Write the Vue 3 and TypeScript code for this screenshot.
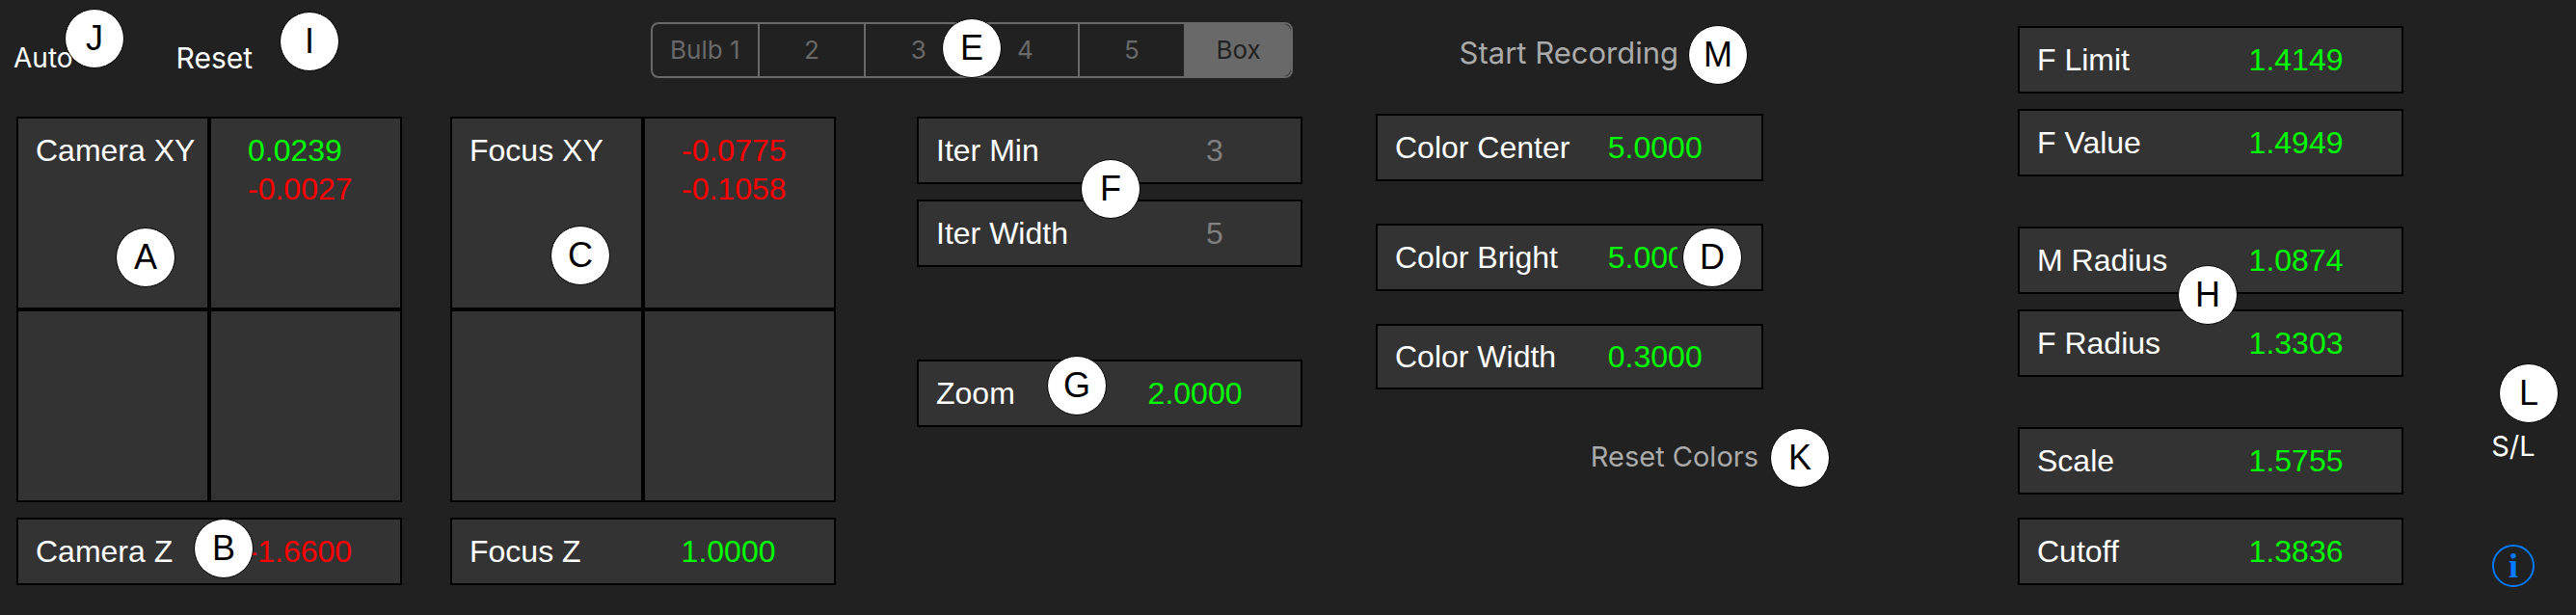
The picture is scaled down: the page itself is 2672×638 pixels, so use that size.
<script setup lang="ts">
import { ref } from 'vue'

interface Param {
  id: string
  label: string
  value: string
  tone?: 'dim' | 'neg'
  clipped?: boolean
}
interface Pad {
  id: string
  label: string
  x: string
  y: string
  depth: Param
}
interface Marker {
  letter: string
  x: number
  y: number
}

const pads: Pad[] = [
  { id: 'camera', label: 'Camera XY', x: '0.0239', y: '-0.0027', depth: { id: 'camera-z', label: 'Camera Z', value: '-1.6600', tone: 'neg' } },
  { id: 'focus', label: 'Focus XY', x: '-0.0775', y: '-0.1058', depth: { id: 'focus-z', label: 'Focus Z', value: '1.0000' } },
]

const iteration: Param[] = [
  { id: 'iter-min', label: 'Iter Min', value: '3', tone: 'dim' },
  { id: 'iter-width', label: 'Iter Width', value: '5', tone: 'dim' },
  { id: 'zoom', label: 'Zoom', value: '2.0000' },
]

const colors: Param[] = [
  { id: 'color-center', label: 'Color Center', value: '5.0000' },
  { id: 'color-bright', label: 'Color Bright', value: '5.0000', clipped: true },
  { id: 'color-width', label: 'Color Width', value: '0.3000' },
]

const shape: Param[] = [
  { id: 'f-limit', label: 'F Limit', value: '1.4149' },
  { id: 'f-value', label: 'F Value', value: '1.4949' },
  { id: 'm-radius', label: 'M Radius', value: '1.0874' },
  { id: 'f-radius', label: 'F Radius', value: '1.3303' },
  { id: 'scale', label: 'Scale', value: '1.5755' },
  { id: 'cutoff', label: 'Cutoff', value: '1.3836' },
]

const formulas = ['Bulb 1', '2', '3', '4', '5', 'Box']
const formula = ref('Box')

// Marker centres: x in column units of the panel grid, y in pixels.
const gridUnits = 2672
const markers: Marker[] = [
  { letter: 'A', x: 151, y: 267 },
  { letter: 'B', x: 232, y: 569 },
  { letter: 'C', x: 602, y: 265 },
  { letter: 'D', x: 1776, y: 267 },
  { letter: 'E', x: 1008, y: 50 },
  { letter: 'F', x: 1152, y: 196 },
  { letter: 'G', x: 1117, y: 400 },
  { letter: 'H', x: 2290, y: 306 },
  { letter: 'I', x: 321, y: 43 },
  { letter: 'J', x: 98, y: 40 },
  { letter: 'K', x: 1867, y: 475 },
  { letter: 'L', x: 2623, y: 408 },
  { letter: 'M', x: 1782, y: 57 },
]

const place = (m: Marker) => ({ left: `${(m.x / gridUnits) * 100}%`, top: `${m.y}px` })
const sign = (v: string) => (v.startsWith('-') ? 'neg' : 'pos')
</script>

<template>
  <main class="panel">
    <div class="session">
      <button type="button" class="action auto">Auto</button>
      <button type="button" class="action reset">Reset</button>
    </div>

    <fieldset class="segments" aria-label="Formula">
      <label v-for="name in formulas" :key="name" class="segment" :class="{ active: formula === name }">
        <input v-model="formula" type="radio" name="formula" :value="name" />
        <span>{{ name }}</span>
      </label>
    </fieldset>

    <section v-for="pad in pads" :key="pad.id" class="column" :class="pad.id">
      <div class="pad">
        <div class="cell"><label :for="pad.id">{{ pad.label }}</label></div>
        <output :id="pad.id" class="cell coords">
          <span :class="sign(pad.x)">{{ pad.x }}</span>
          <span :class="sign(pad.y)">{{ pad.y }}</span>
        </output>
        <div class="cell"></div>
        <div class="cell"></div>
      </div>
      <div class="param">
        <label :for="pad.depth.id">{{ pad.depth.label }}</label>
        <output :id="pad.depth.id" :class="pad.depth.tone">{{ pad.depth.value }}</output>
      </div>
    </section>

    <section class="column iteration">
      <div v-for="p in iteration" :key="p.id" class="param" :class="p.id">
        <label :for="p.id">{{ p.label }}</label>
        <output :id="p.id" :class="p.tone">{{ p.value }}</output>
      </div>
    </section>

    <section class="column colors">
      <div class="record"><button type="button" class="action muted start">Start Recording</button></div>
      <div v-for="p in colors" :key="p.id" class="param" :class="p.id">
        <label :for="p.id">{{ p.label }}</label>
        <output :id="p.id" :class="{ clipped: p.clipped }">{{ p.value }}</output>
      </div>
      <button type="button" class="action muted reset-colors">Reset Colors</button>
    </section>

    <section class="column shape">
      <div v-for="p in shape" :key="p.id" class="param" :class="p.id">
        <label :for="p.id">{{ p.label }}</label>
        <output :id="p.id">{{ p.value }}</output>
      </div>
    </section>

    <aside class="side">
      <button type="button" class="action">S/L</button>
      <button type="button" class="info" aria-label="Info">
        <svg viewBox="0 0 44 44" width="44" height="44" aria-hidden="true">
          <circle cx="22" cy="22" r="21" fill="none" stroke="#007aff" stroke-width="2" />
          <text x="22" y="34" text-anchor="middle">i</text>
        </svg>
      </button>
    </aside>

    <span v-for="m in markers" :key="m.letter" class="marker" :style="place(m)">{{ m.letter }}</span>
  </main>
</template>

<style>
body {
  margin: 0;
  background: #212121;
}
</style>

<style scoped>
.panel {
  position: relative;
  display: grid;
  grid-template-columns:
    minmax(0, 17fr) minmax(0, 400fr) minmax(0, 50fr) minmax(0, 400fr)
    minmax(0, 84fr) minmax(0, 400fr) minmax(0, 76fr) minmax(0, 402fr)
    minmax(0, 264fr) minmax(0, 400fr) minmax(0, 49fr) minmax(0, 130fr);
  grid-template-rows: 121px auto;
  min-height: 100vh;
  box-sizing: border-box;
  background: #212121;
  color: #fff;
  font: 32px/40px "Liberation Sans", Arial, sans-serif;
  white-space: nowrap;
}

.action {
  padding: 0;
  border: 0;
  background: none;
  color: #fff;
  font: 29px/40px Inter, Roboto, sans-serif;
  cursor: pointer;
}
.action.auto { font-size: 28px; }
.action.reset { font-size: 30px; }
.action.start { font-size: 31px; }
.action.muted { color: #aaa; }

.session {
  grid-area: 1 / 1 / 2 / 4;
  display: flex;
  align-items: flex-start;
  gap: 107px;
  padding: 40px 0 0 14px;
}

.segments {
  grid-area: 1 / 4 / 2 / 7;
  display: flex;
  box-sizing: border-box;
  height: 58px;
  min-width: 0;
  margin: 23px 10px 0 208px;
  padding: 0;
  overflow: hidden;
  border: 2px solid #696969;
  border-radius: 8px;
  color: #696969;
  font: 26px/54px Inter, Roboto, sans-serif;
}
.segment {
  position: relative;
  flex: 1 1 0;
  border-left: 2px solid #696969;
  text-align: center;
  cursor: pointer;
}
.segment:first-of-type { border-left: 0; }
.segment.active {
  background: #696969;
  color: #212121;
}
.segment input {
  position: absolute;
  inset: 0;
  margin: 0;
  opacity: 0;
}

.column {
  display: flex;
  flex-direction: column;
}
.camera { grid-area: 2 / 2; }
.focus { grid-area: 2 / 4; }
.iteration { grid-area: 2 / 6; }
.colors { grid-area: 1 / 8 / 3 / 9; }
.shape {
  grid-area: 1 / 10 / 3 / 11;
  padding-top: 27px;
}

.pad {
  display: grid;
  grid-template-columns: 1fr 1fr;
  grid-auto-rows: 200px;
  margin-bottom: 16px;
}
.cell {
  box-sizing: border-box;
  min-width: 0;
  padding: 13px 0 0 18px;
  border: 2px solid #000;
  background: #333;
}
.coords {
  display: flex;
  flex-direction: column;
  padding-left: 38px;
}

.param {
  display: grid;
  grid-template-columns: 3fr 2fr;
  align-items: center;
  box-sizing: border-box;
  height: 70px;
  border: 2px solid #000;
  background: #333;
}
.param label { padding-left: 18px; }
.param output,
.pos { color: #0f0; }
.param output.neg,
.neg { color: #f00; }
.param output.dim {
  padding-right: 20px;
  color: #808080;
  text-align: center;
}
.param output.clipped {
  width: 72px;
  overflow: hidden;
}

.iter-min,
.f-limit,
.m-radius { margin-bottom: 16px; }
.iter-width { margin-bottom: 96px; }
.f-value,
.f-radius { margin-bottom: 52px; }
.scale { margin-bottom: 24px; }

.record {
  display: flex;
  align-items: flex-start;
  justify-content: flex-end;
  height: 83px;
  padding: 35px 88px 0 0;
}
.color-center { margin-bottom: 44px; }
.color-bright { margin-bottom: 34px; }
.color-width { height: 68px; }
.reset-colors {
  align-self: flex-end;
  margin: 50px 5px 0 0;
}

.side {
  grid-area: 1 / 12 / 3 / 13;
  display: flex;
  flex-direction: column;
  align-items: center;
  gap: 82px;
  padding-top: 443px;
}
.info {
  display: flex;
  padding: 0;
  border: 0;
  background: none;
  cursor: pointer;
}
.info text {
  fill: #007aff;
  font: bold 36px "Liberation Serif", serif;
}

.marker {
  position: absolute;
  box-sizing: border-box;
  width: 62px;
  height: 62px;
  border: 1px solid #000;
  border-radius: 50%;
  background: #fff;
  color: #000;
  font-size: 36px;
  line-height: 60px;
  text-align: center;
  transform: translate(-50%, -50%);
}
</style>
